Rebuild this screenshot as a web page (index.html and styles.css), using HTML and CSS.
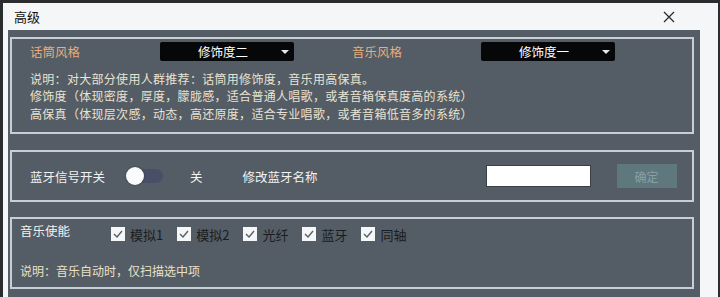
FILE: index.html
```html
<!DOCTYPE html>
<html lang="zh-CN">
  <head>
    <meta charset="UTF-8" />
    <meta name="viewport" content="width=device-width, initial-scale=1.0" />
    <title>高级</title>
    <link rel="stylesheet" href="styles.css">
  </head>
  <body>
    <div class="window">
      <div class="titlebar">
        <span class="title">高级</span>
        <svg class="close" width="12" height="12" viewBox="0 0 12 12">
          <path d="M1 1 L11 11 M11 1 L1 11" stroke="#2b2b2b" stroke-width="1.3" fill="none" />
        </svg>
      </div>

      <div class="content">
        <!-- Style group -->
        <div class="group style-group">
          <div class="style-row">
            <span class="label orange mic-label">话筒风格</span>
            <div class="select">
              <span>修饰度二</span>
              <i class="arrow"></i>
            </div>
            <span class="label orange music-label">音乐风格</span>
            <div class="select">
              <span>修饰度一</span>
              <i class="arrow"></i>
            </div>
          </div>
          <div class="desc">
            <div>说明：对大部分使用人群推荐：话筒用修饰度，音乐用高保真。</div>
            <div>修饰度（体现密度，厚度，朦胧感，适合普通人唱歌，或者音箱保真度高的系统）</div>
            <div>高保真（体现层次感，动态，高还原度，适合专业唱歌，或者音箱低音多的系统）</div>
          </div>
        </div>

        <!-- Bluetooth group -->
        <div class="group bt-group">
          <span class="label bt-label">蓝牙信号开关</span>
          <div class="toggle"><span class="knob"></span></div>
          <span class="label off-label">关</span>
          <span class="label name-label">修改蓝牙名称</span>
          <input class="name-input" type="text" />
          <button class="ok-btn">确定</button>
        </div>

        <!-- Music enable group -->
        <div class="group music-group">
          <div class="check-row">
            <span class="label enable-label">音乐使能</span>
            <label class="check"><span class="box"><svg width="10" height="8" viewBox="0 0 10 8"><path d="M1 4 L4 7 L9 1" stroke="#5a5f66" stroke-width="1.4" fill="none" /></svg></span>模拟1</label>
            <label class="check"><span class="box"><svg width="10" height="8" viewBox="0 0 10 8"><path d="M1 4 L4 7 L9 1" stroke="#5a5f66" stroke-width="1.4" fill="none" /></svg></span>模拟2</label>
            <label class="check"><span class="box"><svg width="10" height="8" viewBox="0 0 10 8"><path d="M1 4 L4 7 L9 1" stroke="#5a5f66" stroke-width="1.4" fill="none" /></svg></span>光纤</label>
            <label class="check"><span class="box"><svg width="10" height="8" viewBox="0 0 10 8"><path d="M1 4 L4 7 L9 1" stroke="#5a5f66" stroke-width="1.4" fill="none" /></svg></span>蓝牙</label>
            <label class="check"><span class="box"><svg width="10" height="8" viewBox="0 0 10 8"><path d="M1 4 L4 7 L9 1" stroke="#5a5f66" stroke-width="1.4" fill="none" /></svg></span>同轴</label>
          </div>
          <div class="note">说明：音乐自动时，仅扫描选中项</div>
        </div>
      </div>
    </div>
  </body>
</html>
```

FILE: styles.css
```css
/* Global */
* {
  margin: 0;
  padding: 0;
  box-sizing: border-box;
}

body {
  background: #2a2c30;
  font-family: "Noto Sans CJK SC", "Noto Sans", sans-serif;
  height: 297px;
  overflow: hidden;
}

/* Window frame */
.window {
  margin: 3px 2px 0 3px;
  height: 294px;
  background: #f5f6f7;
  display: flex;
  flex-direction: column;
}

.titlebar {
  height: 27px;
  flex-shrink: 0;
  display: flex;
  align-items: center;
  justify-content: space-between;
  padding: 0 43px 0 11px;
}

.title {
  font-size: 13px;
  color: #111;
}

.close {
  display: block;
}

.content {
  flex: 1;
  background: #545c65;
  margin: 0 18px 0 5px;
  padding: 7px 6px 0 2px;
}

/* Group boxes */
.group {
  border: 2px solid #c9ced4;
}

.label {
  font-size: 12.5px;
  color: #f2f2f2;
  white-space: nowrap;
}

.orange {
  color: #e9ad7c;
}

/* Style group */
.style-group {
  height: 97px;
  padding: 3px 0 0 18px;
}

.style-row {
  display: flex;
  align-items: center;
  height: 19px;
}

.mic-label {
  width: 130px;
}

.music-label {
  width: 129px;
  margin-left: 58px;
}

.select {
  position: relative;
  width: 134px;
  height: 19px;
  background: #060708;
  border-radius: 2px;
  display: flex;
  align-items: center;
  justify-content: center;
  padding-right: 8px;
  font-size: 12.5px;
  color: #fff;
}

.arrow {
  position: absolute;
  right: 5px;
  top: 8px;
  border-left: 4px solid transparent;
  border-right: 4px solid transparent;
  border-top: 4px solid #e8e8e8;
}

.desc {
  margin-top: 9px;
  font-size: 12px;
  letter-spacing: 0.3px;
  line-height: 17.4px;
  color: #e9e3d2;
  white-space: nowrap;
}

/* Bluetooth group */
.bt-group {
  margin-top: 16px;
  height: 52px;
  display: flex;
  align-items: center;
  padding-left: 18px;
}

.bt-label {
  width: 98px;
}

.toggle {
  position: relative;
  width: 35px;
  height: 14px;
  border-radius: 7px;
  background: #4a4f68;
}

.knob {
  position: absolute;
  left: -2px;
  top: -2px;
  width: 18px;
  height: 18px;
  border-radius: 50%;
  background: #fafbfd;
  box-shadow: 0 0 2px rgba(0, 0, 0, 0.4);
}

.off-label {
  margin-left: 27px;
}

.name-label {
  margin-left: 40px;
}

.name-input {
  margin-left: 168px;
  width: 105px;
  height: 22px;
  background: #fff;
  border: 1px solid #3a3f45;
  outline: none;
}

.ok-btn {
  margin-left: 26px;
  width: 60px;
  height: 24px;
  background: #5e787e;
  border: none;
  font-family: inherit;
  font-size: 12px;
  color: #8aa0a4;
}

/* Music enable group */
.music-group {
  margin-top: 15px;
  height: 72px;
  padding: 4px 0 0 8px;
}

.check-row {
  display: flex;
  align-items: center;
  height: 19px;
}

.enable-label {
  width: 91px;
  margin-top: -4px;
}

.check {
  display: flex;
  align-items: center;
  gap: 5px;
  margin-right: 14px;
  font-size: 13px;
  color: #1a1d21;
  margin-top: 3px;
}

.box {
  width: 14px;
  height: 14px;
  background: #f4f6f8;
  display: flex;
  align-items: center;
  justify-content: center;
}

.box svg {
  display: block;
}

.note {
  margin-top: 20px;
  font-size: 12px;
  color: #ebe1c6;
}
```
